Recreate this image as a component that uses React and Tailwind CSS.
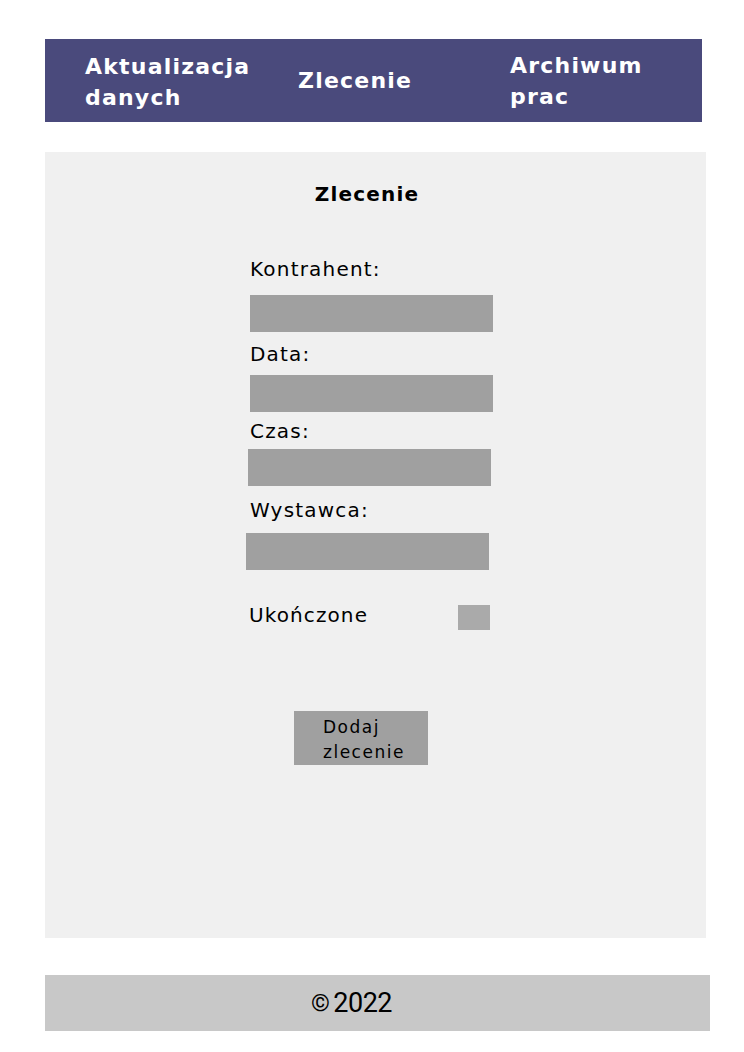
import React from "react";

const fields = [
  { label: "Kontrahent:", labelMt: "mt-[125px]", inputMt: "mt-[14px]", shift: "ml-0" },
  { label: "Data:", labelMt: "mt-[10px]", inputMt: "mt-[9px]", shift: "ml-0" },
  { label: "Czas:", labelMt: "mt-[7px]", inputMt: "mt-[6px]", shift: "-ml-[2px]" },
  { label: "Wystawca:", labelMt: "mt-[12px]", inputMt: "mt-[11px]", shift: "-ml-[4px]" },
];

const App = () => {
  return (
    <div className="min-h-[1052px] w-[744px] bg-white pt-[39px] font-['DejaVu_Sans',sans-serif]">
      <nav className="ml-[45px] w-[657px] h-[83px] bg-[#4a4a7c] text-white font-bold text-[22px] leading-[31px] tracking-[1.2px] grid grid-cols-[213px_212px_1fr] items-center pl-[40px]">
        <a className="block mt-[2px]">Aktualizacja<br />danych</a>
        <a className="block">Zlecenie</a>
        <a className="block">Archiwum<br />prac</a>
      </nav>

      <main className="ml-[45px] mt-[30px] w-[661px] h-[786px] bg-[#f0f0f0] flex flex-col">
        <h2 className="mt-[28px] text-center font-bold text-[20px] leading-[28px] text-black pr-[17px] tracking-[1.2px]">Zlecenie</h2>

        <form className="flex flex-col pl-[205px] -mt-[76px]">
          {fields.map((f) => (
            <div key={f.label} className="flex flex-col">
              <label className={`${f.labelMt} text-[20px] leading-[24px] tracking-[1.2px] text-black`}>{f.label}</label>
              <div className={`${f.inputMt} ${f.shift} w-[243px] h-[37px] bg-[#a0a0a0]`} />
            </div>
          ))}

          <div className="mt-[33px] flex items-start w-[241px] -ml-[1px]">
            <span className="text-[20px] leading-[24px] tracking-[1.1px] text-black">Ukończone</span>
            <div className="ml-auto mt-[2px] w-[32px] h-[25px] bg-[#aaaaaa]" />
          </div>

          <button type="button" className="mt-[81px] ml-[44px] w-[134px] h-[54px] bg-[#a0a0a0] flex flex-col items-start justify-start pt-[4px] pl-[29px] text-[17px] leading-[25px] tracking-[1.5px] text-black">
            <span>Dodaj</span>
            <span>zlecenie</span>
          </button>
        </form>
      </main>

      <footer className="ml-[45px] mt-[37px] w-[665px] h-[56px] bg-[#c8c8c8] flex items-center justify-center pr-[52px] font-['Roboto',sans-serif] text-[27px] tracking-[-0.5px] text-black">
        <span className="text-[24px] mr-[4px]">©</span>2022
      </footer>
    </div>
  );
};

export default App;
